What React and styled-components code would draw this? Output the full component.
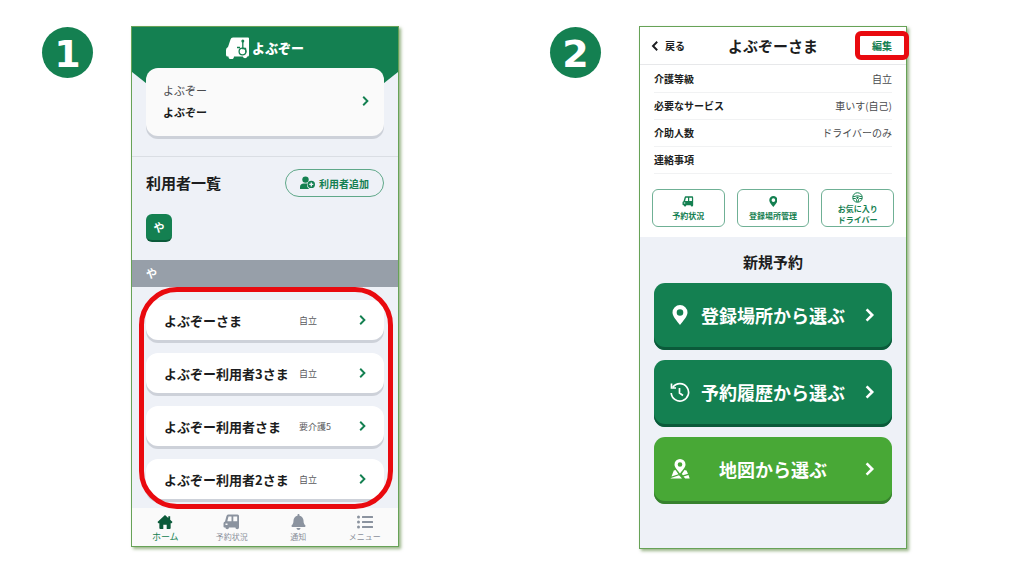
import React from "react";
import styled, { createGlobalStyle } from "styled-components";
import { FaBell, FaListUl } from "react-icons/fa";

const GlobalStyle = createGlobalStyle`
  * {
    box-sizing: border-box;
  }
  body {
    margin: 0;
    background: #ffffff;
    color: #1c1d20;
    font-family: "Noto Sans CJK JP", sans-serif;
  }
  button {
    font-family: inherit;
    cursor: pointer;
  }
  a {
    color: inherit;
    text-decoration: none;
  }
  h1, h2, p, dl, dd, ul {
    margin: 0;
    padding: 0;
  }
  svg {
    display: block;
    flex: none;
  }
`;

const Page = styled.main`
  display: grid;
  grid-template-columns: 1fr 1fr;
  align-items: start;
  gap: 151px;
  padding: 26px 117px 26px 42px;
`;
const Step = styled.section`
  display: flex;
  align-items: flex-start;
  gap: 38px;
`;
const StepNumber = styled.div`
  flex: none;
  width: 51px;
  height: 51px;
  margin-top: 1px;
  border-radius: 50%;
  background: #148051;
  color: #ffffff;
  font-family: "DejaVu Sans", sans-serif;
  font-size: 38px;
  font-weight: bold;
  line-height: 54px;
  text-align: center;
`;
const Phone = styled.div`
  flex: 1;
  min-width: 0;
  border: 1px solid #67a257;
  background: #eef1f7;
  box-shadow: 2px 2px 3px rgba(84, 130, 53, 0.6);
`;

/* 利用者一覧 */
const Hero = styled.header`
  position: relative;
  padding: 0 14px 20px;
  border-bottom: 1px solid #dadee4;

  &::before {
    content: "";
    position: absolute;
    inset: 0 0 auto;
    height: 64px;
    background: #148051;
    clip-path: polygon(
      0 0,
      100% 0,
      100% 45px,
      calc(100% - 24px) 64px,
      24px 64px,
      0 45px
    );
  }
`;
const Logo = styled.div`
  position: relative;
  display: flex;
  align-items: center;
  justify-content: center;
  gap: 3px;
  height: 41px;
  color: #ffffff;
  font-size: 13px;
  font-weight: 900;
  line-height: 38px;
`;
const AccountCard = styled.a`
  position: relative;
  display: flex;
  align-items: center;
  justify-content: space-between;
  height: 68px;
  padding: 0 13px 2px 17px;
  border-radius: 12px;
  background: #fafafa;
  box-shadow: 0 3px 0 #cdd1d9;
  color: #148051;
`;
const AccountName = styled.p`
  color: ${(props) => (props.$bold ? "#1c1d20" : "#4a4b4e")};
  font-size: 11px;
  font-weight: ${(props) => (props.$bold ? "bold" : "normal")};
  line-height: 22px;
`;
const ListHead = styled.div`
  display: flex;
  align-items: center;
  justify-content: space-between;
  padding: 12px 14px 0;
`;
const Title = styled.h2`
  font-size: 15px;
  line-height: 22px;
  text-align: center;
`;
const AddButton = styled.button`
  display: flex;
  align-items: center;
  justify-content: center;
  gap: 4px;
  width: 99px;
  height: 28px;
  padding: 0;
  border: 1px solid #5fa889;
  border-radius: 14px;
  background: transparent;
  color: #148051;
  font-size: 10px;
  font-weight: bold;
`;
const KanaButton = styled.button`
  display: block;
  width: 26px;
  height: 28px;
  margin: 17px 14px 18px;
  padding: 0;
  border: none;
  border-bottom: 2px solid #0b5a3a;
  border-radius: 6px;
  background: #148051;
  color: #ffffff;
  font-size: 11px;
  font-weight: bold;
`;
const KanaBar = styled.h2`
  padding: 0 14px;
  background: #979fa9;
  color: #ffffff;
  font-size: 11px;
  line-height: 27px;
`;
const UserList = styled.ul`
  position: relative;
  display: flex;
  flex-direction: column;
  gap: 13px;
  padding: 13px 14px 9px;
  list-style: none;

  &::after {
    content: "";
    position: absolute;
    z-index: 1;
    inset: 0 5px -1px 7px;
    border: 5px solid #e90a0f;
    border-radius: 38px;
    pointer-events: none;
  }
`;
const UserRow = styled.a`
  display: grid;
  grid-template-columns: 135px 1fr auto;
  align-items: center;
  height: 40px;
  padding: 0 16px 0 18px;
  border-radius: 12px;
  background: #ffffff;
  box-shadow: 0 3px 0 #cdd1d9;
  color: #148051;
`;
const UserName = styled.span`
  color: #1c1d20;
  font-size: 13px;
  font-weight: bold;
  white-space: nowrap;
`;
const UserLevel = styled.span`
  color: #5a5b5e;
  font-size: 9px;
`;
const TabBar = styled.nav`
  display: grid;
  grid-template-columns: repeat(4, 1fr);
  height: 38px;
  background: #fafafa;
`;
const Tab = styled.a`
  display: flex;
  flex-direction: column;
  align-items: center;
  gap: 1px;
  padding-top: 6px;
  color: ${(props) => (props.$active ? "#148051" : "#8b909a")};
  font-size: ${(props) => (props.$active ? "9px" : "8px")};
  line-height: 12px;

  svg {
    height: 16px;
    color: ${(props) => (props.$active ? "#0b5a3a" : "#8b939f")};
  }
`;

/* 利用者詳細 */
const DetailTop = styled.div`
  background: #ffffff;
`;
const DetailHead = styled.header`
  display: grid;
  grid-template-columns: 1fr auto 1fr;
  align-items: center;
  height: 38px;
  border-bottom: 1px solid #e7e8ea;
`;
const BackLink = styled.a`
  display: flex;
  align-items: center;
  gap: 3px;
  padding-left: 10px;
  font-size: 10px;
  font-weight: bold;
`;
const EditButton = styled.button`
  justify-self: end;
  width: 54px;
  height: 29px;
  margin-right: -3px;
  padding: 0;
  border: 5px solid #e90a0f;
  border-radius: 6px;
  background: #ffffff;
  color: #148051;
  font-size: 10px;
  font-weight: bold;
`;
const Facts = styled.dl`
  padding: 1px 14px 0;
`;
const Fact = styled.div`
  display: flex;
  justify-content: space-between;
  border-bottom: 1px solid #f1f2f3;
  font-size: 10px;
  line-height: 26px;

  dt {
    font-weight: bold;
  }
  dd {
    color: #4a4b4e;
  }
`;
const Shortcuts = styled.div`
  display: grid;
  grid-template-columns: repeat(3, 1fr);
  gap: 12px;
  padding: 15px 12px 10px;
`;
const Shortcut = styled.button`
  display: flex;
  flex-direction: column;
  align-items: center;
  justify-content: center;
  gap: ${(props) => (props.$tight ? "0" : "3px")};
  height: 38px;
  padding: 0;
  border: 1px solid #6fb095;
  border-radius: 6px;
  background: #ffffff;
  color: #148051;
  font-size: 8px;
  font-weight: bold;
  line-height: 11px;
  white-space: nowrap;
`;
const Booking = styled.section`
  display: flex;
  flex-direction: column;
  gap: 10px;
  padding: 14px 14px 44px;
`;
const BookingButton = styled.button`
  display: grid;
  grid-template-columns: 22px 1fr 22px;
  align-items: center;
  justify-items: center;
  height: 67px;
  padding: 0 15px 3px;
  border: none;
  border-radius: 11px;
  background: ${(props) => (props.$light ? "#48a836" : "#148051")};
  box-shadow: inset 0 -3px 0 ${(props) => (props.$light ? "#37812e" : "#0b5a3a")};
  color: #ffffff;
  font-size: 18px;
  font-weight: bold;
  line-height: 24px;
  white-space: nowrap;

  svg:last-child {
    justify-self: end;
  }
`;

const Chevron = ({ size = 12, left }) => (
  <svg width={size} height={size} viewBox="0 0 10 10" fill="none">
    <path
      d={left ? "M6 1.500 2.500 5 6 8.500" : "M3.500 1.500l3.500 3.500-3.500 3.500"}
      stroke="currentColor"
      strokeWidth="1.6"
    />
  </svg>
);

const LogoMark = () => (
  <svg width="23" height="22" viewBox="0 0 23 22">
    <path
      fill="#fff"
      d="M7 .5H22a1 1 0 0 1 1 1v16.500a1.500 1.500 0 0 1-1.500 1.500H21.300a2.300 2.300 0 0 1-4.500 0H8a2.800 2.800 0 0 1-5.600 0A2 2 0 0 1 0 17.500v-4.500q0-2 2-3L4.500 2.500Q5 .5 7 .5Z"
    />
    <g fill="none" stroke="#148051" strokeWidth="1.300">
      <path d="M11 10.500h3M16.800 5v6.500h2.700l.5 4" />
      <circle cx="16.500" cy="14.500" r="3.400" />
    </g>
    <circle cx="16.800" cy="4" r="1.500" fill="#148051" />
  </svg>
);

const UserPlusIcon = () => (
  <svg width="15" height="14" viewBox="0 0 15 14" fill="currentColor">
    <circle cx="5.500" cy="3.600" r="3.200" />
    <path d="M0 13V11Q0 7.500 4 7.500h3.500a4.500 4.500 0 0 0 2 5.500Z" />
    <path
      fillRule="evenodd"
      d="M11.300 4.700a3.700 3.700 0 1 1 0 7.400 3.700 3.700 0 0 1 0-7.400Zm-.7 1.700v1.300H9.300v1.400h1.300v1.300H12V9.100h1.300V7.700H12V6.400Z"
    />
  </svg>
);

const HomeIcon = () => (
  <svg width="16" height="17" viewBox="0 0 16 17" fill="currentColor">
    <path d="M8 1l3.500 3.200V2.500h2v3.600L16 8.500l-1 1.200h-1V15a1 1 0 0 1-1 1H9.800v-4.500H6.200V16H3a1 1 0 0 1-1-1V9.700H1L0 8.500Z" />
  </svg>
);

const VanIcon = ({ width = 17 }) => (
  <svg
    width={width}
    height={width - 1}
    viewBox="0 0 17 16"
    fill="currentColor"
    fillRule="evenodd"
  >
    <path d="M5 .5h9.500Q16 .5 16 2v11.500a1.800 1.800 0 0 1-3.600 0H6a1.800 1.800 0 0 1-3.600 0H1.500Q.5 13.500 .5 12.500V9.500Q.5 8 2 7.500L3.500 2Q4 .5 5 .5ZM5.500 2.500 4.300 7.300H8.500V2.500ZM10.300 2.500V7.300H14.200V2.500ZM2.500 9.500v1.500h2V9.500Z" />
  </svg>
);

const PinIcon = ({ height }) => (
  <svg height={height} viewBox="0 0 16 20" fill="currentColor">
    <path
      fillRule="evenodd"
      d="M8 0a7.500 7.500 0 0 1 7.500 7.500C15.500 11.500 11 16 8 20 5 16 .5 11.500 .5 7.500A7.500 7.500 0 0 1 8 0Zm0 4.200a3.300 3.300 0 1 0 0 6.600 3.300 3.300 0 0 0 0-6.600Z"
    />
  </svg>
);

const WheelIcon = () => (
  <svg
    width="11"
    height="11"
    viewBox="0 0 22 22"
    fill="none"
    stroke="currentColor"
    strokeWidth="2"
  >
    <circle cx="11" cy="11" r="9.500" />
    <path d="M2 9.500q9-4 18 0M2 13h5q2.500 1 3 7M20 13h-5q-2.500 1-3 7" />
    <circle cx="11" cy="11.500" r="1.500" fill="currentColor" />
  </svg>
);

const HistoryIcon = () => (
  <svg
    width="20"
    height="20"
    viewBox="0 0 20 20"
    fill="none"
    stroke="currentColor"
    strokeWidth="1.700"
  >
    <path d="M1.200 11A8.700 8.700 0 1 0 3 5M1.500 1.500v4.500H6M9.500 6v5l3.500 2.500" />
  </svg>
);

const MapPinIcon = () => (
  <svg width="20" height="20" viewBox="0 0 20 20" fill="currentColor">
    <path
      fillRule="evenodd"
      d="M10 0a5.500 5.500 0 0 1 5.500 5.500C15.500 8.500 12 11.500 10 14.500 8 11.500 4.500 8.500 4.500 5.500A5.500 5.500 0 0 1 10 0Zm0 3.200a2.300 2.300 0 1 0 0 4.600 2.300 2.300 0 0 0 0-4.600Z"
    />
    <path d="M3.800 11.500 5.500 11l3 4.200L1.500 17.500ZM1 18.900 9 16.200l3 3.300H.500ZM14.500 11l2 .5 1.500 3.300-5 1.500-1.200-1.300ZM13.500 17.600l5-1.500 1.200 3.400h-4.500Z" />
  </svg>
);

const users = [
  { name: "よぶぞーさま", level: "自立" },
  { name: "よぶぞー利用者3さま", level: "自立" },
  { name: "よぶぞー利用者さま", level: "要介護5" },
  { name: "よぶぞー利用者2さま", level: "自立" },
];

const facts = [
  ["介護等級", "自立"],
  ["必要なサービス", "車いす(自己)"],
  ["介助人数", "ドライバーのみ"],
  ["連絡事項", ""],
];

const UserListScreen = () => (
  <Phone>
    <Hero>
      <Logo>
        <LogoMark />
        よぶぞー
      </Logo>
      <AccountCard href="#account">
        <div>
          <AccountName>よぶぞー</AccountName>
          <AccountName $bold>よぶぞー</AccountName>
        </div>
        <Chevron />
      </AccountCard>
    </Hero>
    <ListHead>
      <Title>利用者一覧</Title>
      <AddButton>
        <UserPlusIcon />
        利用者追加
      </AddButton>
    </ListHead>
    <KanaButton>や</KanaButton>
    <KanaBar>や</KanaBar>
    <UserList>
      {users.map((user) => (
        <li key={user.name}>
          <UserRow href="#user">
            <UserName>{user.name}</UserName>
            <UserLevel>{user.level}</UserLevel>
            <Chevron />
          </UserRow>
        </li>
      ))}
    </UserList>
    <TabBar>
      <Tab href="#home" $active>
        <HomeIcon />
        ホーム
      </Tab>
      <Tab href="#bookings">
        <VanIcon />
        予約状況
      </Tab>
      <Tab href="#notices">
        <FaBell size={15} />
        通知
      </Tab>
      <Tab href="#menu">
        <FaListUl size={16} />
        メニュー
      </Tab>
    </TabBar>
  </Phone>
);

const UserDetailScreen = () => (
  <Phone>
    <DetailTop>
      <DetailHead>
        <BackLink href="#back">
          <Chevron left />
          戻る
        </BackLink>
        <Title as="h1">よぶぞーさま</Title>
        <EditButton>編集</EditButton>
      </DetailHead>
      <Facts>
        {facts.map(([label, value]) => (
          <Fact key={label}>
            <dt>{label}</dt>
            <dd>{value}</dd>
          </Fact>
        ))}
      </Facts>
      <Shortcuts>
        <Shortcut>
          <VanIcon width={12} />
          予約状況
        </Shortcut>
        <Shortcut>
          <PinIcon height={11} />
          登録場所管理
        </Shortcut>
        <Shortcut $tight>
          <WheelIcon />
          <span>
            お気に入り
            <br />
            ドライバー
          </span>
        </Shortcut>
      </Shortcuts>
    </DetailTop>
    <Booking>
      <Title>新規予約</Title>
      <BookingButton>
        <PinIcon height={20} />
        登録場所から選ぶ
        <Chevron size={16} />
      </BookingButton>
      <BookingButton>
        <HistoryIcon />
        予約履歴から選ぶ
        <Chevron size={16} />
      </BookingButton>
      <BookingButton $light>
        <MapPinIcon />
        地図から選ぶ
        <Chevron size={16} />
      </BookingButton>
    </Booking>
  </Phone>
);

export default function App() {
  return (
    <>
      <GlobalStyle />
      <Page>
        <Step>
          <StepNumber>1</StepNumber>
          <UserListScreen />
        </Step>
        <Step>
          <StepNumber>2</StepNumber>
          <UserDetailScreen />
        </Step>
      </Page>
    </>
  );
}
